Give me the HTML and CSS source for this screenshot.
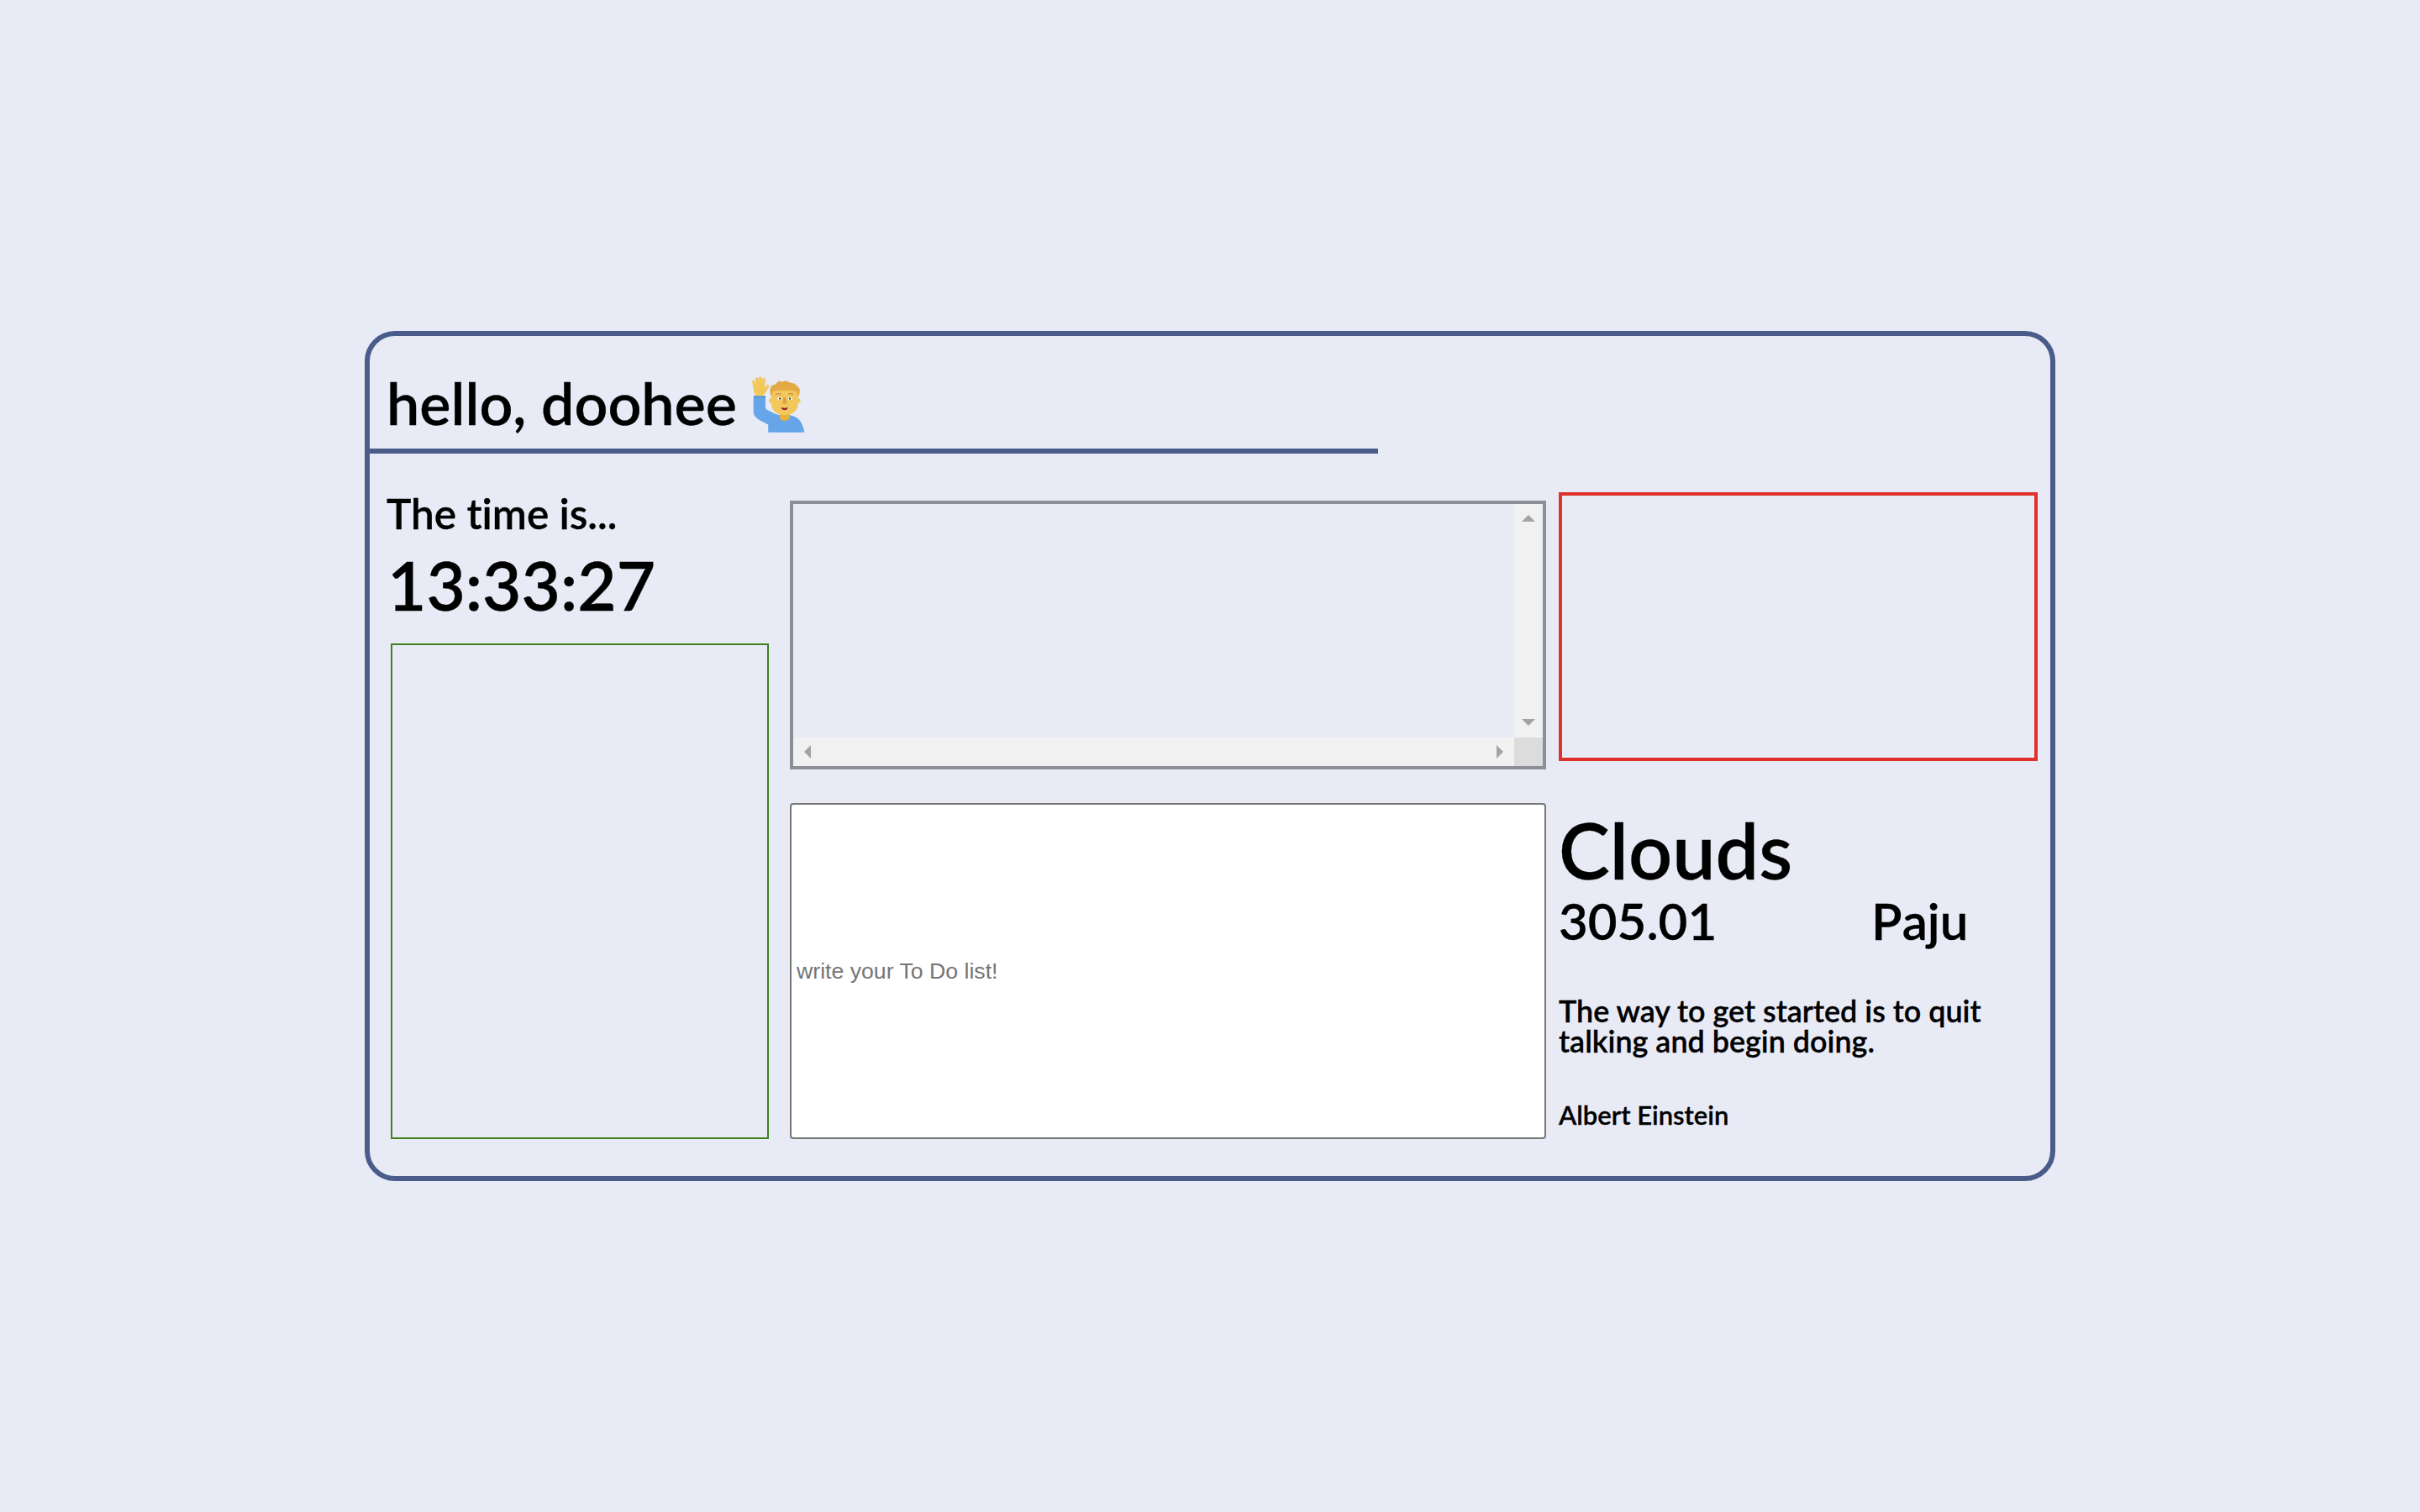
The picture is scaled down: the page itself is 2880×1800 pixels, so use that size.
FILE: index.html
```html
<!DOCTYPE html>
<html lang="en">
<head>
  <meta charset="UTF-8" />
  <title>Momentum</title>
  <link rel="stylesheet" href="styles.css">
</head>
<body>
  <div class="card">
    <div class="greeting">
      <h1 class="hello">hello, doohee</h1>
      <svg class="wave" viewBox="47 37 190 201" aria-hidden="true">
        <path fill="#66a5e8" d="M52 110h43v36c0 6 3 9 8 12l24 12 18 6h38l14 4c20 8 33 26 38 58H105v-28l-32-17c-14-8-21-18-21-32z"/>
        <path fill="#4d90d8" d="M53 106h42v6H53z"/>
        <g fill="none" stroke="#f2c85a" stroke-width="11" stroke-linecap="round">
          <path d="M53 56l6 36M65 46l3 42M77 43v44M90 47l-5 42M103 72L88 96"/>
        </g>
        <path fill="#f2c85a" d="M56 84h36l4 6-12 17H60z"/>
        <path fill="#e8b13c" d="M146 165h36v18c0 8-8 13-18 13s-18-5-18-13z"/>
        <circle cx="115" cy="124" r="8" fill="#f2c85a"/>
        <circle cx="213" cy="124" r="8" fill="#f2c85a"/>
        <path fill="#f2c85a" d="M116 82h96v52c0 26-20 42-48 42s-48-16-48-42z"/>
        <path fill="#e3a945" d="M118 110c-4-6-7-12-6-30l6-10 14-6 10-10 14 2 12-4 14 6 16 4 14 12 6 8c1 16-2 24-6 30l-3-14c-2-7-6-10-14-10h-62c-8 0-12 3-14 10z"/>
        <path fill="none" stroke="#cf9560" stroke-width="5" stroke-linecap="round" d="M134 101c5-3 11-3 15 0M178 101c5-3 11-3 15 0"/>
        <ellipse cx="146" cy="117" rx="8" ry="4.5" fill="#fff"/>
        <ellipse cx="184" cy="117" rx="8" ry="4.5" fill="#fff"/>
        <circle cx="147" cy="117" r="3.5" fill="#3a3230"/>
        <circle cx="183" cy="117" r="3.5" fill="#3a3230"/>
        <path fill="#dca040" d="M160 112h8l4 20c0 4-16 4-16 0z"/>
        <path fill="#8e1f3c" d="M151 148c8 3 17 3 25 0-2 7-6 10-12 10s-11-3-13-10z"/>
      </svg>
    </div>
    <hr class="rule" />

    <div class="columns">
      <section class="clock-col">
        <h2 class="clock-label">The time is...</h2>
        <div class="clock">13:33:27</div>
        <div class="calendar"></div>
      </section>

      <section class="todo-col">
        <div class="list-box">
          <div class="list-view"></div>
          <div class="bar bar-v">
            <span class="arrow arrow-up"></span>
            <span class="arrow arrow-down"></span>
          </div>
          <div class="bar bar-h">
            <span class="arrow arrow-left"></span>
            <span class="arrow arrow-right"></span>
          </div>
          <div class="corner"></div>
        </div>
        <input class="todo-input" type="text" placeholder="write your To Do list!" />
      </section>

      <section class="side-col">
        <div class="photo-box"></div>
        <div class="weather">Clouds</div>
        <div class="weather-row">
          <span class="temp">305.01</span>
          <span class="city">Paju</span>
        </div>
        <p class="quote">The way to get started is to quit talking and begin doing.</p>
        <p class="author">Albert Einstein</p>
      </section>
    </div>
  </div>
</body>
</html>
```

FILE: styles.css
```css
* { box-sizing: border-box; }
body { margin: 0; height: 1800px; display: flex; justify-content: center; align-items: center; background: #e8ebf6; font-family: Lato, sans-serif; font-weight: 600; color: #000; font-variant-ligatures: none; -webkit-text-stroke: 0.02em #000; }
.card { width: 2012px; height: 1012px; border: 6px solid #4a5c8a; border-radius: 36px; }

.greeting { display: flex; height: 134px; padding-left: 20px; }
.hello { margin: 37px 0 0; font-size: 70px; font-weight: 600; line-height: 84px; white-space: nowrap; }
.wave { width: 63px; height: 67px; margin: 48px 0 0 18px; flex: none; }
.rule { width: 1200px; height: 6px; margin: 0; border: none; background: #4a5c8a; }

.columns { display: flex; padding: 42px 0 0 20px; }
.clock-col { width: 480px; }
.clock-label { margin: 1px 0 -1px; font-size: 49.5px; font-weight: 600; line-height: 56px; }
.clock { margin: 8px 0 0 1px; font-size: 80px; line-height: 100px; }
.calendar { width: 450px; height: 590px; margin: 20px 0 0 5px; border: 2px solid #40801f; }

.todo-col { width: 900px; display: flex; flex-direction: column; padding-top: 14px; }
.list-box { width: 900px; height: 320px; border: 4px solid #8e8e96; display: grid; grid-template-columns: 1fr 34px; grid-template-rows: 1fr 34px; }
.bar { background: #f1f1f1; display: flex; justify-content: space-between; align-items: center; }
.bar-v { flex-direction: column; padding: 13px 0 14px; }
.bar-h { padding: 0 13px; }
.corner { background: #dcdcdc; }
.arrow { width: 0; height: 0; border-style: solid; border-color: transparent; }
.arrow-up { border-width: 0 8px 8px; border-bottom-color: #a3a3a3; }
.arrow-down { border-width: 8px 8px 0; border-top-color: #a3a3a3; }
.arrow-left { border-width: 8px 8px 8px 0; border-right-color: #a3a3a3; }
.arrow-right { border-width: 8px 0 8px 8px; border-left-color: #a3a3a3; }
.todo-input { width: 900px; height: 400px; margin-top: 40px; padding: 0 6px; background: #fff; border: 2px solid #767676; border-radius: 4px; font-family: "Liberation Sans", Arial, sans-serif; font-size: 26.67px; -webkit-text-stroke: 0; }
.todo-input::placeholder { color: #757575; }

.side-col { width: 570px; margin-left: 15px; padding-top: 4px; }
.photo-box { width: 570px; height: 320px; border: 4px solid #e0302a; }
.weather { margin-top: 56px; font-size: 91.5px; line-height: 100px; }
.weather-row { display: flex; margin-top: -1px; font-size: 60px; line-height: 70px; margin-bottom: -1px; }
.temp { width: 372px; }
.city { font-kerning: none; }
.quote { margin: 56px 0 0; font-size: 35.9px; line-height: 36px; width: 540px; }
.author { margin: 49px 0 0; font-size: 31px; line-height: 40px; }
```
